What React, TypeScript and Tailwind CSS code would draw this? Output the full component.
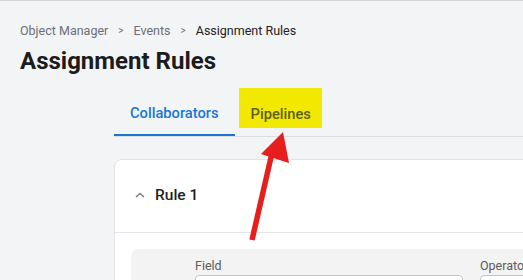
import React from "react";

export default function App() {
  return (
    <div className="relative w-[523px] h-[280px] overflow-hidden bg-[#f3f4f6] border-t border-[#d6d6da] font-['Roboto',sans-serif]">
      {/* Header */}
      <div className="px-5 pt-[22px]">
        <div className="flex items-center gap-[10px] text-[12.5px] leading-4 text-[#6b6f76]">
          <span>Object Manager</span>
          <span className="text-[10px]">&gt;</span>
          <span>Events</span>
          <span className="text-[10px]">&gt;</span>
          <span className="text-[#222]">Assignment Rules</span>
        </div>
        <h1 className="mt-[8px] text-[24px] leading-7 font-bold text-[#1c1c1c]">
          Assignment Rules
        </h1>
      </div>

      {/* Tabs */}
      <div className="ml-[114px] mt-[13px] w-[600px]">
        <div className="flex border-b border-[#dcdde0]">
          <div className="h-12 px-4 flex items-center border-b-2 border-[#1976d2] text-[14.7px] font-medium text-[#1976d2] pt-[4px]">
            Collaborators
          </div>
          <div className="relative h-12 px-4 flex items-center text-[14.7px] font-medium text-[#5e5e10] pt-[4px]">
            <div className="absolute left-[4px] top-0 w-[83px] h-[40px] bg-[#f3e900]" />
            <span className="relative">Pipelines</span>
          </div>
        </div>

        {/* Card */}
        <div className="mt-[22px] w-[600px] bg-white border border-[#e2e3e6] rounded-lg">
          <div className="h-[73px] flex items-center pl-5 border-b border-[#e4e5e8]">
            <svg width="10" height="6" viewBox="0 0 10 6" className="mt-[-2px]">
              <path d="M1 5 L5 1.5 L9 5" fill="none" stroke="#7a7a7a" strokeWidth="1.4" />
            </svg>
            <span className="ml-[10px] text-[15.5px] font-medium text-[#1f1f1f]">Rule 1</span>
          </div>
          <div className="px-4 pt-4">
            <div className="bg-[#f3f3f4] rounded-lg h-[60px] pl-16 pt-[9px] flex gap-[17px]">
              <div className="w-[268px] shrink-0">
                <div className="text-[12.5px] leading-4 text-[#5b5b5b]">Field</div>
                <div className="mt-[1px] h-8 bg-white border border-[#c4c4c4] rounded" />
              </div>
              <div className="w-[200px] shrink-0">
                <div className="text-[12.5px] leading-4 text-[#5b5b5b]">Operator</div>
                <div className="mt-[1px] h-8 bg-white border border-[#c4c4c4] rounded" />
              </div>
            </div>
          </div>
        </div>
      </div>

      {/* Annotation arrow */}
      <svg className="absolute left-0 top-0 pointer-events-none" width="523" height="280">
        <line x1="252" y1="239" x2="272" y2="152" stroke="#e81d1d" strokeWidth="5.5" />
        <polygon points="283,131 261,153 289,162" fill="#e81d1d" />
      </svg>
    </div>
  );
}
